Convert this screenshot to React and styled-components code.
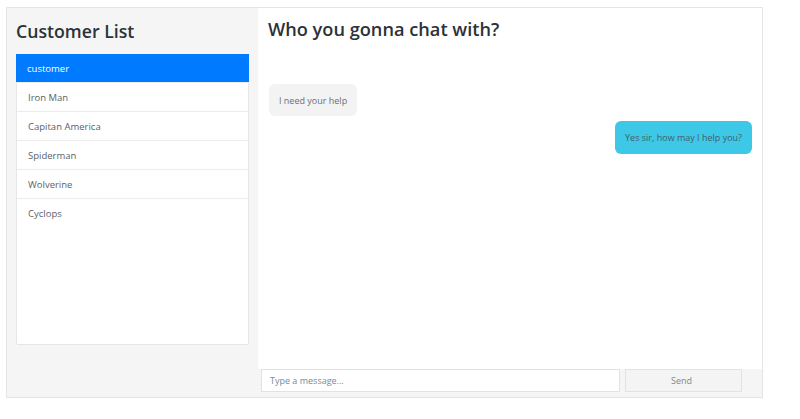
import React from "react";
import styled, { createGlobalStyle } from "styled-components";

const Global = createGlobalStyle`
  html, body { margin: 0; padding: 0; background: #ffffff; }
  body { font-family: "Open Sans", "Noto Sans", sans-serif; }
  * { box-sizing: border-box; }
`;

const Frame = styled.div`
  margin: 7px 0 0 6px;
  width: 757px;
  height: 391px;
  border: 1px solid #e4e4e4;
  background: #f5f5f5;
  display: grid;
  grid-template-columns: 251px 1fr;
`;

const Sidebar = styled.aside`
  display: flex;
  flex-direction: column;
  padding: 10px 9px 0 9px;
`;

const SideTitle = styled.h2`
  margin: 0 0 9px 0;
  font-size: 17.7px;
  font-weight: 600;
  color: #2b3238;
  line-height: 27px;
`;

const List = styled.ul`
  list-style: none;
  margin: 0;
  padding: 0;
  height: 291px;
  background: #fff;
  border: 1px solid #e6e6e6;
  border-radius: 2px;
`;

const Item = styled.li`
  height: 29px;
  display: flex;
  align-items: center;
  padding: 0 11px;
  font-size: 9.5px;
  color: ${(p) => (p.$active ? "#ffffff" : "#5a5f66")};
  background: ${(p) => (p.$active ? "#007bff" : "#ffffff")};
  border-bottom: 1px solid #ececec;
  margin: ${(p) => (p.$active ? "-1px -1px 0 -1px" : "0")};
  &:last-child { border-bottom: none; }
`;

const ChatPanel = styled.section`
  display: flex;
  flex-direction: column;
`;

const ChatBody = styled.div`
  flex: 1;
  background: #fff;
  padding: 8px 10px 0 10px;
  display: flex;
  flex-direction: column;
`;

const ChatTitle = styled.h2`
  margin: 0 0 41px 0;
  font-size: 18.2px;
  font-weight: 600;
  color: #2b3238;
  line-height: 27px;
`;

const Bubble = styled.div`
  align-self: ${(p) => (p.$mine ? "flex-end" : "flex-start")};
  margin-left: ${(p) => (p.$mine ? "0" : "1px")};
  margin-bottom: 5px;
  padding: 0 10px;
  height: ${(p) => (p.$mine ? "33px" : "32px")};
  display: flex;
  align-items: center;
  border-radius: 6px;
  font-size: 9px;
  color: ${(p) => (p.$mine ? "#44606e" : "#6a6f75")};
  background: ${(p) => (p.$mine ? "#3cc8e6" : "#f3f3f3")};
`;

const Composer = styled.form`
  height: 28px;
  display: flex;
  align-items: flex-start;
  padding: 0 20px 0 3px;
  gap: 5px;
  margin: 0;
`;

const Input = styled.input`
  width: 359px;
  height: 23px;
  border: 1px solid #e2e2e2;
  background: #fff;
  padding: 0 8px;
  font-family: inherit;
  font-size: 9px;
  color: #555;
  outline: none;
  &::placeholder { color: #7a8a96; }
`;

const SendButton = styled.button`
  flex: 1;
  height: 23px;
  border: 1px solid #e2e2e2;
  background: #f4f4f4;
  font-family: inherit;
  font-size: 9px;
  color: #7a8a96;
  padding: 0 4px 0 0;
`;

const customers = ["customer", "Iron Man", "Capitan America", "Spiderman", "Wolverine", "Cyclops"];

export default function App() {
  return (
    <>
      <Global />
      <Frame>
        <Sidebar>
          <SideTitle>Customer List</SideTitle>
          <List>
            {customers.map((c, i) => (
              <Item key={c} $active={i === 0}>{c}</Item>
            ))}
          </List>
        </Sidebar>
        <ChatPanel>
          <ChatBody>
            <ChatTitle>Who you gonna chat with?</ChatTitle>
            <Bubble>I need your help</Bubble>
            <Bubble $mine>Yes sir, how may I help you?</Bubble>
          </ChatBody>
          <Composer onSubmit={(e) => e.preventDefault()}>
            <Input placeholder="Type a message..." />
            <SendButton type="button">Send</SendButton>
          </Composer>
        </ChatPanel>
      </Frame>
    </>
  );
}
